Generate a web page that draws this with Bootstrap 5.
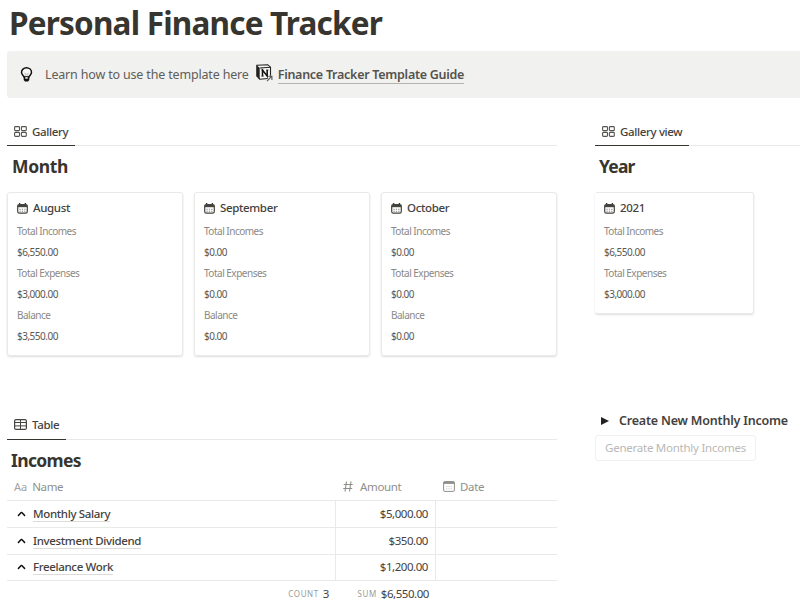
<!DOCTYPE html>
<html lang="en">
<head>
<meta charset="utf-8">
<meta name="viewport" content="width=device-width, initial-scale=1">
<title>Personal Finance Tracker</title>
<link href="https://cdn.jsdelivr.net/npm/bootstrap@5.3.0/dist/css/bootstrap.min.css" rel="stylesheet">
<style>
body{font-family:"Noto Sans","Open Sans",sans-serif;font-size:11.5px;letter-spacing:-.35px;line-height:18px;color:#44423d;background:#fff;overflow:hidden}
.page{width:800px;height:603px;padding-left:7px;overflow:hidden}
.page-title{font-size:31.5px;line-height:46px;height:51px;padding-left:2px;font-weight:700;letter-spacing:-.8px;color:#37352f}
.callout{height:47px;background:#f1f1ef;border-radius:3px 0 0 3px;padding-left:13px;font-size:12.5px;color:#5f5e5a;margin-bottom:21px}
.learn{margin:0 7px 0 12px;letter-spacing:-.17px}
.nlogo{margin:-3px 5px 0 0}
.guide{font-weight:600;border-bottom:1px solid #b5b4b1;line-height:16px;color:#55534e;letter-spacing:-.27px;margin-top:1px}
.col-main{width:550px}
.col-side{width:205px;margin-left:38px}
.tabs{height:27px;border-bottom:1px solid #e9e9e7}
.tab-on{height:27px;border-bottom:1px solid #37352f;padding:0 7px 0 7px;font-weight:500}
.tab-on svg{margin:-1px 5px 0 0}
.sect{font-size:17.5px;line-height:24px;font-weight:700;margin:8px 0 14px;padding-left:5px;letter-spacing:-.35px;color:#37352f}
.sect-y{padding-left:4px;letter-spacing:-.8px}
.sect-t{margin:8px 0 1px;padding-left:4px;letter-spacing:-.65px}
.tile{border:1px solid #e9e9e8;border-radius:3px;box-shadow:0 1px 2px rgba(15,15,15,.14);padding:6px 9px 0}
.tile-h{height:164px;width:176px}
.tile-y{height:122px;width:159px;border-left-color:transparent;padding-left:8px}
.tile-name{font-weight:500;line-height:18px;margin-bottom:4px}
.tile-name svg{margin:0 5px 0 0}
.prop{font-size:10px;line-height:21.1px;letter-spacing:-.5px;color:#5a5853}
.prop-k{color:#8b8985}
.lower{margin-top:57px}
.lower .tab-on{padding-bottom:2px}
.grid-tb{display:grid;grid-template-columns:328px 100px 122px}
.grid-tb>div{display:flex;align-items:center}
.hd{height:28px;color:#908f8b;border-bottom:1px solid #e9e9e7;padding-top:1px}
.aa{margin:0 5px 0 7px;font-size:11px;letter-spacing:0;color:#a3a29e}
.hd svg{margin-top:-2px}
.h-amt{padding-left:8px}
.h-amt svg{margin-right:7px}
.h-date svg{margin:-2px 5px 0 8px}
.rw{height:27px;border-bottom:1px solid #e9e9e7}
.rw-last{height:26px}
.rw>div{padding-bottom:1px}
.rw>div+div{border-left:1px solid #e9e9e7}
.rw a{color:#44423d;font-weight:500;text-decoration:none;border-bottom:1px solid #dcdbd9;line-height:15px}
.chev{margin:0 7px 0 10px}
.num{justify-content:flex-end;padding-right:7px;letter-spacing:-.45px}
.ft{height:26px}
.ft .num{padding-right:6px}
.cap{font-size:8px;letter-spacing:.6px;color:#9b9a97;margin-right:4px}
.toggle{font-size:12.5px;font-weight:600;letter-spacing:-.2px;padding-left:6px;height:18px;margin:-1px 0 5px}
.tg{margin-left:10px}
.gen{width:161px;height:26px;border:1px solid #f0f0ef;border-radius:3px;color:#b9b8b6;font-size:11.5px;letter-spacing:-.25px;padding:0;line-height:24px}
svg{flex:none}
</style>
</head>
<body>
<svg class="d-none">
<symbol id="gal" viewBox="0 0 13 11"><g fill="none" stroke="#55534e" stroke-width="1.1"><rect x=".6" y=".6" width="4.9" height="4" rx=".9"/><rect x="7.4" y=".6" width="4.9" height="4" rx=".9"/><rect x=".6" y="6.4" width="4.9" height="4" rx=".9"/><rect x="7.4" y="6.4" width="4.9" height="4" rx=".9"/></g></symbol>
<symbol id="cal" viewBox="0 0 11 11"><path d="M2.6 0v2M8.4 0v2" stroke="#37352f" stroke-width="1.4"/><rect x=".7" y="1.7" width="9.6" height="8.4" rx="1.6" fill="#fff" stroke="#45433e" stroke-width="1.2"/><path d="M.7 3.1h9.600" stroke="#45433e" stroke-width="2.2"/><path d="M2.4 6.3h6.2M2.4 8.3h6.2" stroke="#8a8986" stroke-width="1.1" stroke-dasharray="1.3 1.1"/></symbol>
<symbol id="up" viewBox="0 0 8 5"><path d="M.8 4.200C2 3.500 3 1.500 4 1.100 5 1.500 6 3.500 7.200 4.200" fill="none" stroke="#111" stroke-width="1.3"/></symbol>
</svg>
<main class="page">
<h1 class="page-title m-0 text-nowrap">Personal Finance Tracker</h1>
<section class="callout d-flex align-items-center text-nowrap">
<svg width="13" height="16" viewBox="0 0 13 16"><path d="M4.1 10C3.8 8.600 1.500 7.600 1.500 5.300a5 4.500 0 0 1 10 0C11.500 7.600 9.200 8.600 8.900 10z" fill="#f7f7f6" stroke="#111" stroke-width="1.500"/><path d="M4.300 6l2.200 1.200L8.700 6M5.300 7v3M7.700 7v3" fill="none" stroke="#aaa" stroke-width=".6"/><path d="M3.700 9.500h5.600v3.500L8 14.600H5L3.700 13z" fill="#111"/><path d="M5.300 10v1.800h2.400V10" fill="#ddd"/></svg>
<span class="learn">Learn how to use the template here</span>
<svg class="nlogo" width="17" height="18" viewBox="0 0 17 18"><path d="M.8 1.200L11.700.7 14.500 3.200V14.200L3.700 15.200.8 12z" fill="#f7f7f6" stroke="#222" stroke-width="1.100"/><path d="M.8 1.200L3.700 4V15.200L.8 12z" fill="#222"/><path d="M3.700 4l10.800-.7" stroke="#222" stroke-width="1.100"/><path d="M6.500 12V6.100l4.700 5.900V6" fill="none" stroke="#111" stroke-width="1.500"/><path d="M5.400 6h2M5.400 12.200h2.300M10.100 6h2.300" stroke="#111" stroke-width=".8"/><path d="M11 17.200L16 12.200" stroke="#f1f1ef" stroke-width="3"/><path d="M11 17.200l4.800-5M12.200 12.200h3.700v3.800" fill="none" stroke="#555" stroke-width="1.100"/></svg>
<span class="guide">Finance Tracker Template Guide</span>
</section>
<div class="d-flex">
<div class="col-main">
<div class="tabs d-flex"><div class="tab-on d-flex align-items-center"><svg width="13" height="11"><use href="#gal"/></svg><span>Gallery</span></div></div>
<h2 class="sect">Month</h2>
<div class="d-flex justify-content-between">
<article class="tile tile-h"><div class="tile-name d-flex align-items-center"><svg width="11" height="11"><use href="#cal"/></svg><span>August</span></div><div class="prop"><div class="prop-k">Total Incomes</div><div>$6,550.00</div><div class="prop-k">Total Expenses</div><div>$3,000.00</div><div class="prop-k">Balance</div><div>$3,550.00</div></div></article>
<article class="tile tile-h"><div class="tile-name d-flex align-items-center"><svg width="11" height="11"><use href="#cal"/></svg><span>September</span></div><div class="prop"><div class="prop-k">Total Incomes</div><div>$0.00</div><div class="prop-k">Total Expenses</div><div>$0.00</div><div class="prop-k">Balance</div><div>$0.00</div></div></article>
<article class="tile tile-h"><div class="tile-name d-flex align-items-center"><svg width="11" height="11"><use href="#cal"/></svg><span>October</span></div><div class="prop"><div class="prop-k">Total Incomes</div><div>$0.00</div><div class="prop-k">Total Expenses</div><div>$0.00</div><div class="prop-k">Balance</div><div>$0.00</div></div></article>
</div>
</div>
<div class="col-side">
<div class="tabs d-flex"><div class="tab-on d-flex align-items-center"><svg width="13" height="11"><use href="#gal"/></svg><span>Gallery view</span></div></div>
<h2 class="sect sect-y">Year</h2>
<article class="tile tile-y"><div class="tile-name d-flex align-items-center"><svg width="11" height="11"><use href="#cal"/></svg><span>2021</span></div><div class="prop"><div class="prop-k">Total Incomes</div><div>$6,550.00</div><div class="prop-k">Total Expenses</div><div>$3,000.00</div></div></article>
</div>
</div>
<div class="d-flex lower">
<div class="col-main">
<div class="tabs d-flex"><div class="tab-on d-flex align-items-center"><svg width="13" height="11" viewBox="0 0 13 11"><rect x=".6" y=".6" width="11.800" height="9.800" rx="1.500" fill="none" stroke="#45433e" stroke-width="1.200"/><path d="M.6 3.500h11.800M.6 6.900h11.800M6.500.6v9.800" stroke="#45433e"/></svg><span>Table</span></div></div>
<h2 class="sect sect-t">Incomes</h2>
<div class="grid-tb hd"><div><span class="aa">Aa</span><span>Name</span></div><div class="h-amt"><svg width="10" height="11" viewBox="0 0 10 11"><path d="M3.500.5L2 10.500M8 .5L6.500 10.500M.7 3.500h9M.2 7.500h9" stroke="#8f8e8a" stroke-width="1.100"/></svg><span>Amount</span></div><div class="h-date"><svg width="12" height="11" viewBox="0 0 12 11"><rect x=".6" y=".6" width="10.800" height="9.800" rx="1.300" fill="none" stroke="#8f8e8a"/><path d="M.6 1.800h10.800" stroke="#8f8e8a" stroke-width="2.200"/><path d="M3 5.500h6M3 7.800h6" stroke="#d5d4d2" stroke-dasharray="1.500 .8"/></svg><span>Date</span></div></div>
<div class="grid-tb rw"><div><svg width="9" height="6" class="chev"><use href="#up"/></svg><a href="#">Monthly Salary</a></div><div class="num">$5,000.00</div><div></div></div>
<div class="grid-tb rw"><div><svg width="9" height="6" class="chev"><use href="#up"/></svg><a href="#">Investment Dividend</a></div><div class="num">$350.00</div><div></div></div>
<div class="grid-tb rw rw-last"><div><svg width="9" height="6" class="chev"><use href="#up"/></svg><a href="#">Freelance Work</a></div><div class="num">$1,200.00</div><div></div></div>
<div class="grid-tb ft"><div class="num"><span class="cap">COUNT</span><span>3</span></div><div class="num"><span class="cap">SUM</span><span>$6,550.00</span></div><div></div></div>
</div>
<div class="col-side">
<div class="toggle d-flex align-items-center text-nowrap"><svg width="8" height="8" viewBox="0 0 8 8"><path d="M0 0l8 4-8 4z" fill="#222"/></svg><span class="tg">Create New Monthly Income</span></div>
<button class="gen btn text-nowrap">Generate Monthly Incomes</button>
</div>
</div>
</main>
<script src="https://cdn.jsdelivr.net/npm/bootstrap@5.3.0/dist/js/bootstrap.bundle.min.js"></script>
</body>
</html>
